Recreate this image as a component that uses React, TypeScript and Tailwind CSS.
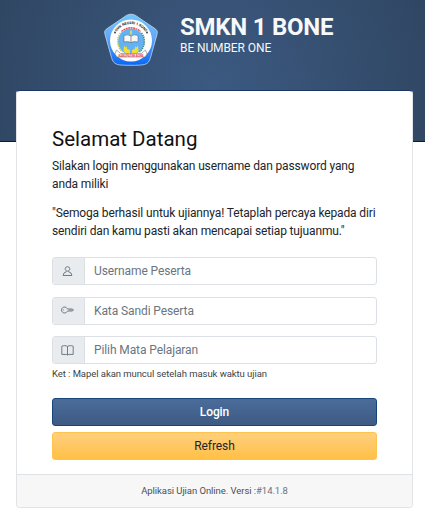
import type { ReactNode } from "react";

function SchoolLogo() {
  return (
    <svg className="h-[54px] w-[56px]" viewBox="0 0 56 54" aria-label="SMKN 1 Bone">
      <defs>
        <linearGradient id="shield" x1="0" y1="0" x2="0" y2="1">
          <stop offset="0" stopColor="#72c7fb" />
          <stop offset="0.45" stopColor="#63a8f8" />
          <stop offset="1" stopColor="#0867f5" />
        </linearGradient>
        <path id="logoArc" d="M12 21.500a17.500 17.500 0 0 1 32 0" />
      </defs>
      <path
        d="M28 1.200c3.500.2 5 1.300 9 4.300l14 9.500c3 2 3.900 3 3 6.500l-6.500 23c-1.200 4-2.300 5.800-6 7-4 1.100-23 1.100-27 0-3.700-1.200-4.800-3-6-7L2 21.500c-.9-3.500 0-4.500 3-6.500l14-9.500c4-3 5.500-4.100 9-4.300Z"
        fill="url(#shield)"
        stroke="#bfd4ec"
        strokeWidth=".8"
      />
      <circle cx="28" cy="27.500" r="21" fill="#fff" />
      <circle cx="28" cy="28.500" r="13" fill="#62b2f5" />
      <path d="M18.500 18.500a14 14 0 0 1 19 0" fill="none" stroke="#e04f58" strokeWidth="1.400" strokeDasharray="2 .5" />
      <path d="M17.500 20a14 14 0 0 0 2 19" fill="none" stroke="#c8cd5a" strokeWidth="1.500" strokeDasharray="1.500 .7" />
      <path d="M38.500 20a14 14 0 0 1-2 19" fill="none" stroke="#388b76" strokeWidth="1.500" strokeDasharray="1.500 .7" />
      <text fontSize="3.600" fontWeight="700" fill="#222" textAnchor="middle">
        <textPath href="#logoArc" startOffset="50%">
          SMK NEGERI 1 BONE
        </textPath>
      </text>
      <circle cx="12" cy="19.500" r=".9" fill="#333" />
      <circle cx="44" cy="19.500" r=".9" fill="#333" />
      <path d="M28 17.500v4" stroke="#e9e04c" strokeWidth="1.700" />
      <path d="M21 22.500q4-1.500 7 .5 3-2 7-.5v6.500q-4-1-7 .5-3-1.500-7-.5Z" fill="#f7f7f4" stroke="#555" strokeWidth=".5" />
      <path d="M28 23v6.500" stroke="#555" strokeWidth=".6" />
      <path d="M21 32.500l1.500 2 1-1.500.8 3 2.700 1v4h-3.500l-3-3ZM35 32.500l-1.500 2-1-1.500-.8 3-2.700 1v4h3.500l3-3Z" fill="#f0df30" />
      <path d="M13.500 37l-1.500 4 2 3h28l2-3-1.500-4-4 3.500h-21Z" fill="#fff" stroke="#777" strokeWidth=".6" />
      <text x="28" y="43.700" fontSize="4" fontWeight="700" fill="#dd4652" textAnchor="middle" textLength="25" lengthAdjust="spacingAndGlyphs">
        KABUPATEN BONE
      </text>
    </svg>
  );
}

function Icon({ children }: { children: ReactNode }) {
  return (
    <svg className="size-[13px]" viewBox="0 0 13 13" fill="none" stroke="#5c6873" strokeWidth=".85" strokeLinejoin="round">
      {children}
    </svg>
  );
}

function UserIcon() {
  return (
    <Icon>
      <path d="M6.500 1.700a2.200 2.200 0 0 1 1.200 4.100c-.7.500-1.700.5-2.400 0A2.200 2.200 0 0 1 6.500 1.700Z" />
      <path d="M5.200 6.200v.7L3 8l-.9 2.500h8.800L10 8 7.800 6.900v-.7" />
    </Icon>
  );
}

function KeyIcon() {
  return (
    <Icon>
      <path d="M6.200 4.600A3 3 0 1 0 6.200 7.400l.7-.4h4.600l1-1-1-1H6.900Z" />
      <path d="M2.400 5.400v1.200M7.500 6h4" strokeWidth=".6" />
    </Icon>
  );
}

function BookIcon() {
  return (
    <Icon>
      <path d="M.8 2.200C2.700 1.400 4.700 1.400 6.500 2.400c1.800-1 3.800-1 5.700-.2v8.200h-4.400l-1.300.7-1.300-.7H.8ZM6.500 2.400v8.500" />
    </Icon>
  );
}

function Field({ icon, placeholder, type = "text" }: { icon: ReactNode; placeholder: string; type?: string }) {
  return (
    <div className="flex h-7 overflow-hidden rounded-[3px] border border-[#dcdfe4] bg-white">
      <span className="flex w-8 shrink-0 items-center justify-center border-r border-[#dcdfe4] bg-[#e9ecef] pr-[3px]">
        {icon}
      </span>
      <input
        type={type}
        placeholder={placeholder}
        className="min-w-0 flex-1 px-[9px] text-[12px] tracking-[-0.100px] outline-none placeholder:text-[#6b757f]"
      />
    </div>
  );
}

export default function App() {
  return (
    <div className="h-[512px] overflow-hidden bg-white font-[Roboto,sans-serif] text-[#212529]">
      <header className="h-[142px] border-b border-[#071b4b] bg-[radial-gradient(circle_at_50%_60%,#3b5981_0%,#385377_35%,#304763_100%)]">
        <div className="flex pt-[13px] pl-[103px] text-[#f6f8fa]">
          <SchoolLogo />
          <div className="pl-[21px]">
            <h1 className="text-[24px] leading-[28px] font-bold tracking-[-0.250px]">SMKN 1 BONE</h1>
            <p className="text-[12px] leading-[14px] tracking-[-0.100px]">BE NUMBER ONE</p>
          </div>
        </div>
      </header>

      <main className="relative mr-3 ml-4 -mt-[52px] h-[418px] rounded-[4px] border border-[#e1e3e6] border-t-[#193765] bg-white">
        <div className="h-[383px] px-[35px] pt-[36px]">
          <h2 className="text-[20.500px] leading-[25px] text-[#111]">Selamat Datang</h2>
          <p className="mt-[6px] text-[12px] leading-[17.500px] tracking-[-0.137px] whitespace-nowrap">
            Silakan login menggunakan username dan password yang
            <br />
            anda miliki
          </p>
          <p className="mt-3 text-[12px] leading-[17.500px] tracking-[-0.137px] whitespace-nowrap">
            "Semoga berhasil untuk ujiannya! Tetaplah percaya kepada diri
            <br />
            sendiri dan kamu pasti akan mencapai setiap tujuanmu."
          </p>
          <form className="mt-[17px]" onSubmit={(e) => e.preventDefault()}>
            <div className="flex flex-col gap-[11.500px]">
              <Field icon={<UserIcon />} placeholder="Username Peserta" />
              <Field icon={<KeyIcon />} placeholder="Kata Sandi Peserta" type="password" />
              <Field icon={<BookIcon />} placeholder="Pilih Mata Pelajaran" />
            </div>
            <p className="mt-[3px] text-[9.500px] leading-[14px] tracking-[-0.060px] text-[#3e4348]">
              Ket : Mapel akan muncul setelah masuk waktu ujian
            </p>
            <button className="mt-[17px] block h-7 w-full rounded-[3px] border border-[#174579] bg-linear-to-b from-[#4b6c9b] to-[#3d5a83] text-[12px] font-medium tracking-[-0.100px] text-white">
              Login
            </button>
            <button type="button" className="mt-[6px] block h-7 w-full rounded-[3px] border border-[#ffc44f] bg-linear-to-b from-[#ffcf7b] to-[#ffc044] text-[12px] tracking-[-0.100px]">
              Refresh
            </button>
          </form>
        </div>
        <footer className="flex h-[33px] items-center justify-center rounded-b-[4px] border-t border-[#dfe2e4] bg-[#f7f7f7] text-[9.500px] tracking-[-0.060px] text-[#4b5055]">
          Aplikasi Ujian Online. Versi :<span className="text-[#667180]">#14.1.8</span>
        </footer>
      </main>
    </div>
  );
}
